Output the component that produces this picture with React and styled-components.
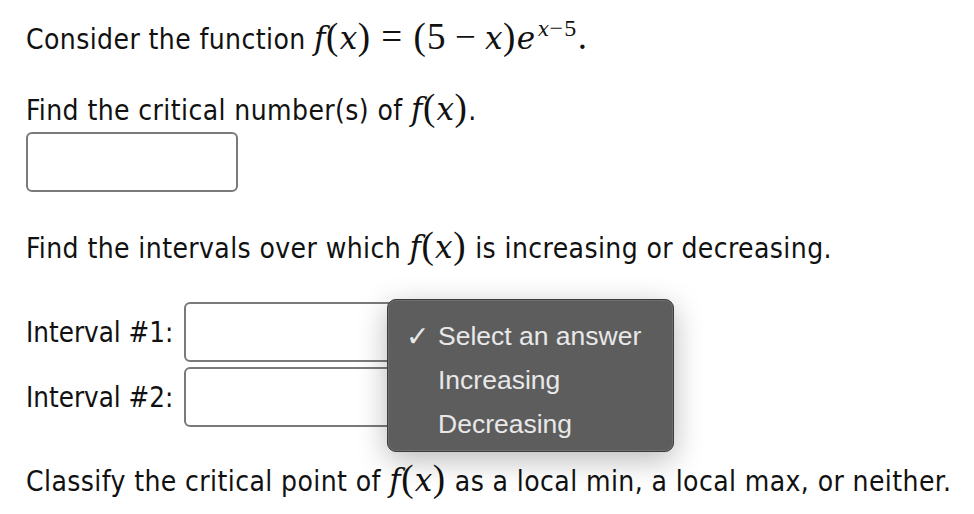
import React from "react";
import styled, { createGlobalStyle } from "styled-components";

const GlobalStyle = createGlobalStyle`
  html, body {
    margin: 0;
    background: #ffffff;
  }
  body {
    font-family: "DejaVu Sans Condensed", "DejaVu Sans", sans-serif;
    color: #111111;
  }
`;

const Page = styled.div`
  padding: 23px 26px 0 26px;
  width: 974px;
  height: 514px;
  box-sizing: border-box;
  overflow: hidden;
`;

const Para = styled.p`
  margin: ${(p) => p.$top || 0}px 0 0 0;
  font-size: 28px;
  line-height: 34px;
  letter-spacing: 0.4px;
  white-space: nowrap;
`;

const Math = styled.span`
  font-family: "Liberation Serif", "DejaVu Serif", serif;
  font-size: 37px;
  line-height: 20px;
  letter-spacing: 1.3px;
`;

const V = styled.i`
  font-family: "DejaVu Serif", serif;
  font-style: italic;
  font-size: 0.84em;
  letter-spacing: 0.5px;
`;

const Op = styled.span`
  padding: 0 ${(p) => p.$space || 7}px;
`;

const Sup = styled.sup`
  font-size: 24px;
  vertical-align: 13px;
  line-height: 0;
  margin-left: 2px;
`;

const AnswerBox = styled.div`
  width: 212px;
  height: 60px;
  box-sizing: border-box;
  border: 2px solid #7a7a7a;
  border-radius: 6px;
  background: #fff;
  margin-top: ${(p) => p.$top || 0}px;
`;

const Intervals = styled.div`
  position: relative;
  margin-top: 36px;
  display: flex;
  flex-direction: column;
  gap: 5px;
`;

const IntervalRow = styled.div`
  display: flex;
  align-items: center;
`;

const Label = styled.span`
  font-size: 27.5px;
  width: 158px;
  white-space: nowrap;
`;

const Menu = styled.div`
  position: absolute;
  left: 361px;
  top: -3px;
  width: 287px;
  height: 153px;
  box-sizing: border-box;
  background: #5d5d5d;
  border: 1px solid #3c3c3c;
  border-radius: 9px;
  box-shadow: inset 0 0 0 1px #6e6e6e, 0 8px 30px rgba(0, 0, 0, 0.28);
  padding: 14px 0 0 0;
  font-family: "Liberation Sans", Arial, sans-serif;
  font-size: 26.5px;
  color: #e8e8e8;
`;

const MenuItem = styled.div`
  display: flex;
  align-items: center;
  height: 44px;
  padding-left: 18px;
`;

const Check = styled.span`
  width: 32px;
  font-size: 28px;
  font-family: "DejaVu Sans", sans-serif;
`;

const Fx = () => (
  <Math>
    <V>f</V>(<V>x</V>)
  </Math>
);

export default function App() {
  return (
    <>
      <GlobalStyle />
      <Page>
        <Para>
          Consider the function{" "}
          <Math>
            <V>f</V>(<V>x</V>)<Op $space={10}>=</Op>(5<Op $space={8}>−</Op>
            <V>x</V>)<V>e</V>
            <Sup>
              <V>x</V>−5
            </Sup>
            .
          </Math>
        </Para>
        <Para $top={37}>
          Find the critical number(s) of <Fx />.
        </Para>
        <AnswerBox $top={4} />
        <Para $top={40}>
          Find the intervals over which <Fx /> is increasing or decreasing.
        </Para>
        <Intervals>
          <IntervalRow>
            <Label>Interval #1:</Label>
            <AnswerBox />
          </IntervalRow>
          <IntervalRow>
            <Label>Interval #2:</Label>
            <AnswerBox />
          </IntervalRow>
          <Menu>
            <MenuItem>
              <Check>✓</Check>Select an answer
            </MenuItem>
            <MenuItem>
              <Check />
              Increasing
            </MenuItem>
            <MenuItem>
              <Check />
              Decreasing
            </MenuItem>
          </Menu>
        </Intervals>
        <Para $top={38}>
          Classify the critical point of <Fx /> as a local min, a local max, or
          neither.
        </Para>
      </Page>
    </>
  );
}
